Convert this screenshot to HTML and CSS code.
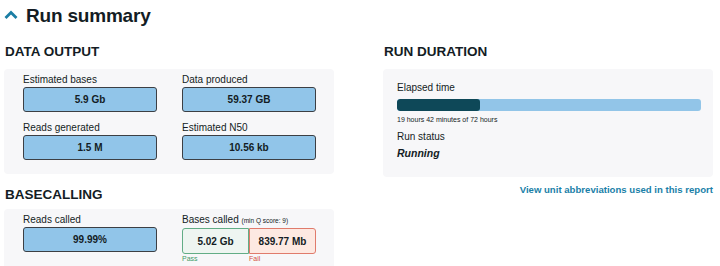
FILE: index.html
```html
<!DOCTYPE html>
<html lang="en">
<head>
	<meta charset="UTF-8">
	<title>Run summary</title>
	<link rel="stylesheet" href="styles.css">
</head>
<body>
	<header class="summary-head">
		<svg class="chev" width="14" height="9" viewBox="0 0 14 9">
			<path d="M1.5 8 L7 2.5 L12.5 8" fill="none" stroke="#1b7ea4" stroke-width="2.8"/>
		</svg>
		<h1>Run summary</h1>
	</header>

	<div class="summary">
		<section class="col">
			<h2>DATA OUTPUT</h2>
			<div class="panel">
				<div class="stat-grid">
					<div class="stat">
						<div class="stat-label">Estimated bases</div>
						<div class="stat-value">5.9 Gb</div>
					</div>
					<div class="stat">
						<div class="stat-label">Data produced</div>
						<div class="stat-value">59.37 GB</div>
					</div>
					<div class="stat">
						<div class="stat-label">Reads generated</div>
						<div class="stat-value">1.5 M</div>
					</div>
					<div class="stat">
						<div class="stat-label">Estimated N50</div>
						<div class="stat-value">10.56 kb</div>
					</div>
				</div>
			</div>

			<h2 class="second">BASECALLING</h2>
			<div class="panel">
				<div class="stat-grid">
					<div class="stat">
						<div class="stat-label">Reads called</div>
						<div class="stat-value">99.99%</div>
					</div>
					<div class="stat">
						<div class="stat-label">Bases called <small>(min Q score: 9)</small></div>
						<div class="split">
							<div class="split-part pass">5.02 Gb</div>
							<div class="split-part fail">839.77 Mb</div>
						</div>
						<div class="split-notes">
							<span class="note-pass">Pass</span>
							<span class="note-fail">Fail</span>
						</div>
					</div>
				</div>
			</div>
		</section>

		<section class="col">
			<h2>RUN DURATION</h2>
			<div class="panel duration">
				<div class="dur-label">Elapsed time</div>
				<div class="bar"><div class="bar-fill" style="width: 27.4%"></div></div>
				<div class="bar-note">19 hours 42 minutes of 72 hours</div>
				<div class="dur-label">Run status</div>
				<div class="status">Running</div>
			</div>
			<div class="abbr">
				<a href="#">View unit abbreviations used in this report</a>
			</div>
		</section>
	</div>
</body>
</html>
```

FILE: styles.css
```css
*{
	padding: 0;
	margin: 0;
	box-sizing: border-box;
}
body{
	font-family: "Liberation Sans", Arial, Helvetica, sans-serif;
	color: #131c24;
	background: #fff;
	width: 720px;
	height: 266px;
	overflow: hidden;
}
.summary-head{
	display: flex;
	align-items: center;
	gap: 8px;
	padding: 3px 0 0 4px;
	height: 28px;
}
.summary-head h1{
	font-size: 19px;
	font-weight: bold;
	letter-spacing: -0.2px;
	line-height: 22px;
}
.chev{
	display: block;
	margin-top: -3px;
}
.summary{
	display: grid;
	grid-template-columns: 330px 330px;
	column-gap: 49px;
	padding: 0 0 0 4px;
}
h2{
	font-size: 13.5px;
	font-weight: bold;
	line-height: 16px;
	margin: 16px 0 9px 1px;
}
h2.second{
	margin-top: 13px;
	margin-bottom: 6px;
}
.panel{
	background: #f7f7f9;
	border-radius: 4px;
	padding: 5px 19px 14px 19px;
}
.stat-grid{
	display: grid;
	grid-template-columns: 134px 134px;
	column-gap: 25px;
	row-gap: 10px;
}
.stat-label{
	font-size: 10px;
	line-height: 12px;
	margin-bottom: 1px;
	white-space: nowrap;
}
.stat-label small{
	font-size: 6.5px;
}
.stat-value{
	height: 25px;
	background: #91c5e9;
	border: 1px solid #3c3f44;
	border-radius: 3px;
	font-size: 10px;
	font-weight: bold;
	display: flex;
	align-items: center;
	justify-content: center;
}
.split{
	display: flex;
	height: 26px;
}
.split-part{
	flex: 1;
	display: flex;
	align-items: center;
	justify-content: center;
	font-size: 10px;
	font-weight: bold;
}
.split-part.pass{
	background: #eef5f1;
	border: 1px solid #62ad86;
	border-radius: 3px 0 0 3px;
}
.split-part.fail{
	background: #fde9e2;
	border: 1px solid #e07b6c;
	border-radius: 0 3px 3px 0;
}
.split-notes{
	display: flex;
	font-size: 7px;
	line-height: 9px;
}
.split-notes span{
	flex: 1;
}
.note-pass{
	color: #3f9a68;
}
.note-fail{
	color: #d4503f;
}
.duration{
	padding: 13px 12px 16px 14px;
	height: 108px;
}
.dur-label{
	font-size: 10px;
	line-height: 12px;
}
.bar{
	height: 12px;
	margin-top: 5px;
	background: #92c5e8;
	border-radius: 3px;
	overflow: hidden;
}
.bar-fill{
	height: 100%;
	background: #0e4858;
	border-radius: 3px;
}
.bar-note{
	font-size: 7px;
	line-height: 9px;
	margin: 4px 0 7px;
}
.status{
	font-size: 10.5px;
	font-weight: bold;
	font-style: italic;
	line-height: 12px;
	margin-top: 4px;
}
.abbr{
	text-align: right;
	margin-top: 5px;
	line-height: 12px;
}
.abbr a{
	font-size: 9.6px;
	font-weight: bold;
	color: #1a7fa8;
	text-decoration: none;
}
```
